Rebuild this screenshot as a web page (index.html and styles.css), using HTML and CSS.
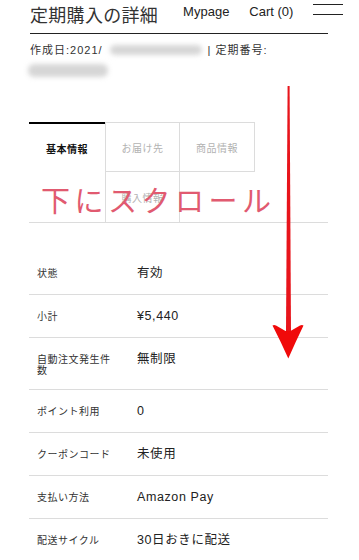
FILE: index.html
```html
<!DOCTYPE html>
<html lang="ja">
<head>
<meta charset="utf-8">
<title>定期購入の詳細</title>
<link rel="stylesheet" href="styles.css">
</head>
<body>
<div class="page">
  <header class="top">
    <h1 class="title">定期購入の詳細</h1>
    <nav class="nav"><a class="nav-link">Mypage</a><a class="nav-link">Cart (0)</a></nav>
    <div class="burger"></div>
  </header>
  <div class="rule"></div>

  <div class="meta">
    <div class="meta-line">作成日:2021/<span class="blur blur-date"></span>| 定期番号:</div>
    <div class="meta-line2"><span class="blur blur-num"></span></div>
  </div>

  <div class="tabs-wrap">
    <div class="tabs">
      <div class="tab tab-active">基本情報</div>
      <div class="tab tab-2">お届け先</div>
      <div class="tab tab-3">商品情報</div>
      <div class="tab tab-4">購入情報</div>
    </div>
    <div class="scroll-note">下にスクロール</div>
  </div>

  <div class="table">
    <div class="row"><div class="label">状態</div><div class="value">有効</div></div>
    <div class="row"><div class="label">小計</div><div class="value">¥5,440</div></div>
    <div class="row"><div class="label">自動注文発生件数</div><div class="value">無制限</div></div>
    <div class="row"><div class="label">ポイント利用</div><div class="value">0</div></div>
    <div class="row"><div class="label">クーポンコード</div><div class="value">未使用</div></div>
    <div class="row"><div class="label">支払い方法</div><div class="value">Amazon Pay</div></div>
    <div class="row"><div class="label">配送サイクル</div><div class="value">30日おきに配送</div></div>
  </div>

  <svg class="arrow" width="359" height="560" viewBox="0 0 359 560" aria-hidden="true">
    <polygon points="287.6,86 289.6,86 291,332 286,332" fill="#e8141b"/>
    <path d="M272.5,325.5 Q274,324.5 276,325.5 L285.5,331 L290.5,331 L300,325.5 Q302,324.5 303.5,325.5 Q296,341 288.3,358.5 Q280.5,341 272.5,325.5 Z" fill="#f00a0a"/>
  </svg>
</div>
</body>
</html>
```

FILE: styles.css
```css
html, body {
  margin: 0;
  padding: 0;
  background: #fff;
  overflow: hidden;
}
body {
  font-family: "Liberation Sans", "Noto Sans CJK JP", sans-serif;
  color: #222;
}
.page {
  position: relative;
  width: 359px;
  height: 560px;
  overflow: hidden;
}
.top {
  display: flex;
  align-items: flex-start;
  height: 33px;
  padding-left: 30px;
}
.title {
  margin: 4px 0 0 0;
  font-family: "Noto Sans CJK JP", sans-serif;
  font-weight: 400;
  font-size: 18px;
  line-height: 20px;
  letter-spacing: 0.3px;
  color: #333;
}
.nav {
  display: flex;
  gap: 20px;
  margin: 4px 0 0 25px;
  font-size: 13px;
  line-height: 16px;
  color: #222;
}
.nav-link {
  color: #222;
}
.burger {
  margin: 4px 16px 0 auto;
  width: 30px;
  height: 9px;
  border-top: 1px solid #222;
  border-bottom: 1px solid #222;
}
.rule {
  margin: 0 31px 0 30px;
  border-top: 1px solid #222;
}
.meta {
  padding-left: 30px;
  font-size: 11px;
  color: #333;
}
.meta-line {
  margin-top: 8px;
  line-height: 16px;
  letter-spacing: 1px;
  display: flex;
  align-items: center;
}
.blur {
  display: inline-block;
  background: #d6d6d6;
  border-radius: 6px;
  filter: blur(2.5px);
}
.blur-date {
  width: 92px;
  height: 10px;
  margin: 0 6px 0 7px;
}
.meta-line2 {
  margin-top: 6px;
  height: 14px;
  margin-left: -2px;
}
.blur-num {
  width: 80px;
  height: 13px;
}
.tabs-wrap {
  position: relative;
  margin: 44px 31px 0 29px;
}
.tabs {
  display: grid;
  grid-template-columns: 76px 75px 75px;
  grid-template-rows: 50px 50px;
  border-bottom: 1px solid #dcdcdc;
  font-family: "Noto Sans CJK JP", sans-serif;
  font-size: 10px;
  letter-spacing: 0.5px;
}
.tab {
  box-sizing: border-box;
  display: flex;
  align-items: center;
  justify-content: center;
  color: #b2b2b2;
}
.tab-active {
  grid-row: 1;
  grid-column: 1;
  border-top: 2px solid #000;
  color: #111;
  font-weight: 700;
}
.tab-2 {
  grid-row: 1;
  grid-column: 2;
  border: 1px solid #dcdcdc;
}
.tab-3 {
  grid-row: 1;
  grid-column: 3;
  border-top: 1px solid #dcdcdc;
  border-right: 1px solid #dcdcdc;
  border-bottom: 1px solid #dcdcdc;
}
.tab-4 {
  grid-row: 2;
  grid-column: 2;
  border-left: 1px solid #dcdcdc;
  border-right: 1px solid #dcdcdc;
}
.scroll-note {
  position: absolute;
  left: 12px;
  top: 63px;
  font-family: "Noto Sans CJK JP", sans-serif;
  font-size: 29px;
  line-height: 29px;
  letter-spacing: 4.5px;
  color: #e15a70;
  white-space: nowrap;
}
.table {
  margin: 29px 31px 0 29px;
}
.row {
  display: flex;
  align-items: flex-start;
  padding: 14px 0 14px 8px;
  border-bottom: 1px solid #dcdcdc;
}
.label {
  width: 80px;
  font-family: "Noto Sans CJK JP", sans-serif;
  font-size: 10px;
  line-height: 11px;
  letter-spacing: 0.5px;
  color: #333;
  padding-top: 1px;
}
.value {
  margin-left: 20px;
  padding-top: 1px;
  font-family: "Liberation Sans", "Noto Sans CJK JP", sans-serif;
  font-size: 12.5px;
  line-height: 13px;
  letter-spacing: 0.6px;
  color: #222;
}
.arrow {
  position: absolute;
  left: 0;
  top: 0;
  pointer-events: none;
}
```
